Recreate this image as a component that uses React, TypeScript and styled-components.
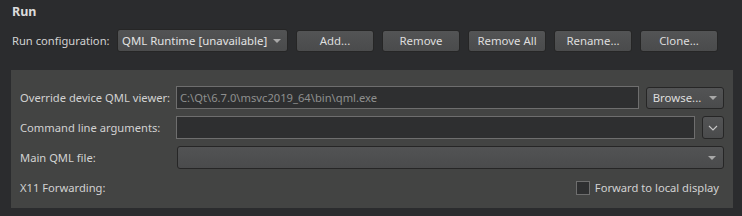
import styled, { createGlobalStyle } from "styled-components";

const GlobalStyle = createGlobalStyle`
  html, body {
    margin: 0;
    padding: 0;
    background: #2b2c2e;
  }
  body {
    font-family: "Noto Sans", "Open Sans", sans-serif;
    font-size: 11.2px;
    color: #d4d4d4;
  }
`;

const Page = styled.div`
  width: 742px;
  height: 216px;
  box-sizing: border-box;
  padding: 3px 9px 0 11px;
`;

const Title = styled.div`
  font-weight: bold;
  font-size: 12.5px;
  padding-left: 1px;
  height: 26px;
  line-height: 18px;
  color: #dcdcdc;
`;

const ConfigRow = styled.div`
  display: flex;
  align-items: center;
  height: 23px;
  padding-left: 1px;
`;

const Label = styled.span<{ $width?: number }>`
  width: ${(p) => (p.$width ? `${p.$width}px` : "auto")};
  flex-shrink: 0;
  white-space: nowrap;
  color: #d2d2d2;
`;

const Combo = styled.div<{ $width?: number; $grow?: boolean }>`
  box-sizing: border-box;
  height: 23px;
  width: ${(p) => (p.$width ? `${p.$width}px` : "auto")};
  flex: ${(p) => (p.$grow ? 1 : "none")};
  display: flex;
  align-items: center;
  padding: 0 7px 0 4px;
  border: 1px solid #262626;
  border-radius: 3px;
  background: linear-gradient(#525354, #4a4b4c);
  color: #e2e2e2;
  white-space: nowrap;
  font-size: 11.4px;
`;

const ComboText = styled.span`
  flex: 1;
`;

const Arrow = styled.span`
  width: 0;
  height: 0;
  border-left: 4px solid transparent;
  border-right: 4px solid transparent;
  border-top: 4px solid #a8a8a8;
  margin-left: 6px;
`;

const Button = styled.button<{ $width?: number }>`
  box-sizing: border-box;
  height: 22px;
  width: ${(p) => (p.$width ? `${p.$width}px` : "78px")};
  border: 1px solid #262626;
  border-radius: 3px;
  background: linear-gradient(#535455, #4a4b4c);
  color: #dedede;
  font-family: inherit;
  font-size: 11.4px;
  padding: 0;
  display: flex;
  align-items: center;
  justify-content: center;
  gap: 8px;
  flex-shrink: 0;
`;

const Buttons = styled.div`
  display: flex;
  gap: 8px;
  margin-left: 8px;
`;

const Panel = styled.div`
  margin-top: 18px;
  width: 722px;
  height: 138px;
  box-sizing: border-box;
  background: #434443;
  padding: 16px 9px 0 9px;
  display: flex;
  flex-direction: column;
  gap: 7px;
`;

const FieldRow = styled.div`
  display: flex;
  align-items: center;
  gap: 7px;
  height: 23px;
`;

const Input = styled.div<{ $disabled?: boolean }>`
  box-sizing: border-box;
  flex: 1;
  height: 23px;
  border: 1px solid #6e6e6e;
  background: #2e2f30;
  color: ${(p) => (p.$disabled ? "#8f8f8f" : "#d8d8d8")};
  display: flex;
  align-items: center;
  padding-left: 3px;
  white-space: nowrap;
`;

const IconButton = styled(Button)`
  width: 22px;
  height: 23px;
`;

const CheckArea = styled.div`
  margin-left: auto;
  display: flex;
  align-items: center;
  gap: 5px;
  padding-right: 5px;
`;

const Box = styled.span`
  box-sizing: border-box;
  width: 14px;
  height: 14px;
  border: 1px solid #6e6e6e;
  background: #2f3031;
`;

export default function App() {
  return (
    <Page>
      <GlobalStyle />
      <Title>Run</Title>
      <ConfigRow>
        <Label $width={105}>Run configuration:</Label>
        <Combo $width={171}>
          <ComboText>QML Runtime [unavailable]</ComboText>
          <Arrow />
        </Combo>
        <Buttons>
          <Button>Add...</Button>
          <Button>Remove</Button>
          <Button>Remove All</Button>
          <Button>Rename...</Button>
          <Button>Clone...</Button>
        </Buttons>
      </ConfigRow>
      <Panel>
        <FieldRow>
          <Label $width={149}>Override device QML viewer:</Label>
          <Input $disabled>C:\Qt\6.7.0\msvc2019_64\bin\qml.exe</Input>
          <Button $width={78}>
            Browse...
            <Arrow style={{ marginLeft: 0 }} />
          </Button>
        </FieldRow>
        <FieldRow>
          <Label $width={149}>Command line arguments:</Label>
          <Input />
          <IconButton>
            <svg width="10" height="6" viewBox="0 0 10 6">
              <path d="M1 1 L5 5 L9 1" fill="none" stroke="#c8c8c8" strokeWidth="1.1" />
            </svg>
          </IconButton>
        </FieldRow>
        <FieldRow>
          <Label $width={150}>Main QML file:</Label>
          <Combo $grow>
            <ComboText />
            <Arrow />
          </Combo>
        </FieldRow>
        <FieldRow>
          <Label>X11 Forwarding:</Label>
          <CheckArea>
            <Box />
            <Label>Forward to local display</Label>
          </CheckArea>
        </FieldRow>
      </Panel>
    </Page>
  );
}
